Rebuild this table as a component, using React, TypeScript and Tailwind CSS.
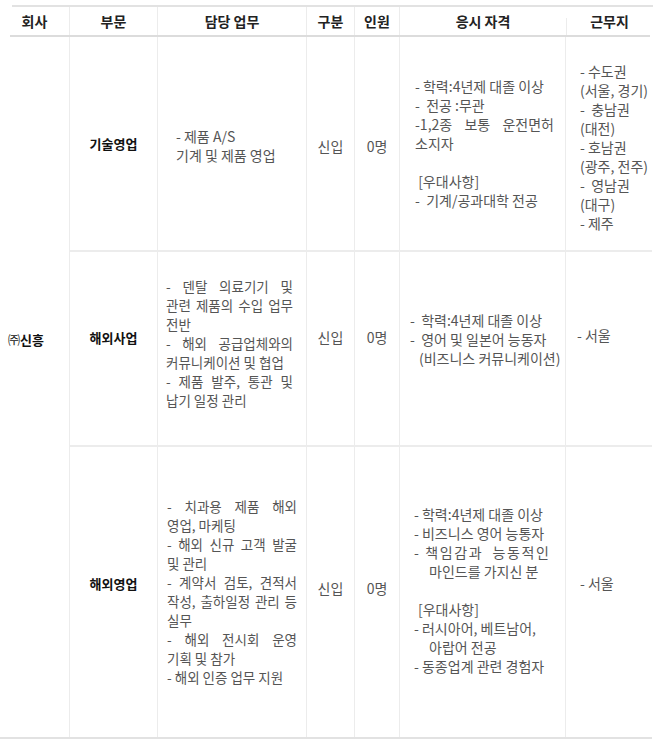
import React from "react";

type L = { t: string; j?: boolean; pl?: string; tr?: string };

function Lines({ lines, w }: { lines: L[]; w: string }) {
  return (
    <div className={w}>
      {lines.map((l, i) =>
        l.t === "" ? (
          <div key={i} className="h-[19px]" />
        ) : l.j ? (
          <div key={i} className={`text-justify [text-align-last:justify] ${l.tr ?? ""}`}>
            {l.t}
          </div>
        ) : (
          <div key={i} className={`whitespace-pre ${l.pl ?? ""} ${l.tr ?? ""}`}>
            {l.t}
          </div>
        )
      )}
    </div>
  );
}

const rowGrid = "grid grid-cols-[88px_149px_48px_45px_166px_86px]";
const vline = "border-r border-[#ececec]";

export default function App() {
  return (
    <div className="w-[665px] h-[742px] bg-white pt-[5px] font-['Noto_Sans_CJK_KR',sans-serif] text-[14px] leading-[19px] text-[#555]">
      <div className="w-[652px]">
        {/* top line */}
        <div className="ml-[12px] w-[641px] h-[2px] bg-[#e2e2e2]" />
        {/* header */}
        <div className="grid grid-cols-[70px_88px_149px_48px_45px_166px_86px] h-[28px] text-[#222] font-bold text-[14px]">
          <div className={`flex items-center justify-center ${vline}`}>회사</div>
          <div className={`flex items-center justify-center ${vline}`}>부문</div>
          <div className={`flex items-center justify-center ${vline}`}>담당 업무</div>
          <div className={`flex items-center justify-center ${vline}`}>구분</div>
          <div className={`flex items-center justify-center ${vline}`}>인원</div>
          <div className="flex items-center justify-center">응시 자격</div>
          <div className="flex">
            <div className="w-px mt-[11px] bg-[#ececec]" />
            <div className="flex-1 flex items-center justify-center">근무지</div>
          </div>
        </div>
        {/* header bottom line */}
        <div className="ml-[10px] w-[640px] h-[2px] bg-[#dcdcdc]" />
        {/* body */}
        <div className="flex h-[700px]">
          <div className={`w-[70px] pt-[293px] pl-[8px] ${vline}`}>
            <span className="text-[#111] text-[12px]">㈜</span>
            <span className="text-[#111] font-bold text-[13px]">신흥</span>
          </div>
          <div className="flex flex-col w-[582px]">
            {/* row 1 */}
            <div className={`${rowGrid} h-[215px] border-b-2 border-[#ececec]`}>
              <div className={`flex items-center justify-center text-[#111] font-bold text-[13px] ${vline}`}>기술영업</div>
              <div className={`flex items-center pt-[4px] pl-[18px] ${vline}`}>
                <Lines w="" lines={[{ t: "- 제품 A/S" }, { t: "기계 및 제품 영업" }]} />
              </div>
              <div className={`flex items-center justify-center pt-[6px] ${vline}`}>신입</div>
              <div className={`flex items-center justify-center pt-[6px] ${vline}`}>0명</div>
              <div className={`flex items-center pl-[15px] ${vline}`}>
                <Lines
                  w="w-[139px]"
                  lines={[
                    { t: "- 학력:4년제 대졸 이상" },
                    { t: "-  전공 :무관" },
                    { t: "-1,2종 보통 운전면허", j: true },
                    { t: "소지자" },
                    { t: "" },
                    { t: " [우대사항]" },
                    { t: "-  기계/공과대학 전공" },
                  ]}
                />
              </div>
              <div className="flex items-center pl-[14px] pt-[8px]">
                <Lines
                  w=""
                  lines={[
                    { t: "- 수도권" },
                    { t: "(서울, 경기)" },
                    { t: "-  충남권" },
                    { t: "(대전)" },
                    { t: "- 호남권" },
                    { t: "(광주, 전주)" },
                    { t: "-  영남권" },
                    { t: "(대구)" },
                    { t: "- 제주" },
                  ]}
                />
              </div>
            </div>
            {/* row 2 */}
            <div className={`${rowGrid} h-[195px] border-b-2 border-[#ececec]`}>
              <div className={`flex items-center justify-center pb-[23px] text-[#111] font-bold text-[13px] ${vline}`}>해외사업</div>
              <div className={`flex items-center pl-[8px] pb-[10px] text-[13.5px] ${vline}`}>
                <Lines
                  w="w-[127px]"
                  lines={[
                    { t: "- 덴탈 의료기기 및", j: true },
                    { t: "관련 제품의 수입 업무", j: true },
                    { t: "전반" },
                    { t: "- 해외 공급업체와의", j: true },
                    { t: "커뮤니케이션 및 협업" },
                    { t: "- 제품 발주, 통관 및", j: true },
                    { t: "납기 일정 관리" },
                  ]}
                />
              </div>
              <div className={`flex items-center justify-center pb-[23px] ${vline}`}>신입</div>
              <div className={`flex items-center justify-center pb-[23px] ${vline}`}>0명</div>
              <div className={`flex items-center pl-[10px] pb-[19px] ${vline}`}>
                <Lines
                  w=""
                  lines={[
                    { t: "-  학력:4년제 대졸 이상" },
                    { t: "-  영어 및 일본어 능동자" },
                    { t: "(비즈니스 커뮤니케이션)", pl: "pl-[9px]" },
                  ]}
                />
              </div>
              <div className="flex items-center pl-[11px] pb-[27px]">- 서울</div>
            </div>
            {/* row 3 */}
            <div className={`${rowGrid} h-[290px]`}>
              <div className={`flex items-center justify-center pb-[18px] text-[#111] font-bold text-[13px] ${vline}`}>해외영업</div>
              <div className={`flex items-center pl-[9px] text-[13.5px] ${vline}`}>
                <Lines
                  w="w-[130px]"
                  lines={[
                    { t: "- 치과용 제품 해외", j: true },
                    { t: "영업, 마케팅" },
                    { t: "- 해외 신규 고객 발굴", j: true },
                    { t: "및 관리" },
                    { t: "- 계약서 검토, 견적서", j: true },
                    { t: "작성, 출하일정 관리 등", j: true },
                    { t: "실무" },
                    { t: "- 해외 전시회 운영", j: true },
                    { t: "기획 및 참가" },
                    { t: "- 해외 인증 업무 지원" },
                  ]}
                />
              </div>
              <div className={`flex items-center justify-center pb-[8px] ${vline}`}>신입</div>
              <div className={`flex items-center justify-center pb-[8px] ${vline}`}>0명</div>
              <div className={`flex items-center pl-[14px] pb-[4px] ${vline}`}>
                <Lines
                  w="w-[145px]"
                  lines={[
                    { t: "- 학력:4년제 대졸 이상" },
                    { t: "- 비즈니스 영어 능통자" },
                    { t: "- 책임감과  능동적인", tr: "tracking-[1.6px]" },
                    { t: "마인드를 가지신 분", pl: "pl-[15px]" },
                    { t: "" },
                    { t: "[우대사항]", pl: "pl-[4px]" },
                    { t: "- 러시아어, 베트남어," },
                    { t: "아랍어 전공", pl: "pl-[15px]" },
                    { t: "- 동종업계 관련 경험자" },
                  ]}
                />
              </div>
              <div className="flex items-center pl-[14px] pb-[18px]">- 서울</div>
            </div>
          </div>
        </div>
        {/* bottom line */}
        <div className="w-[652px] h-[2px] bg-[#e2e2e2]" />
      </div>
    </div>
  );
}
